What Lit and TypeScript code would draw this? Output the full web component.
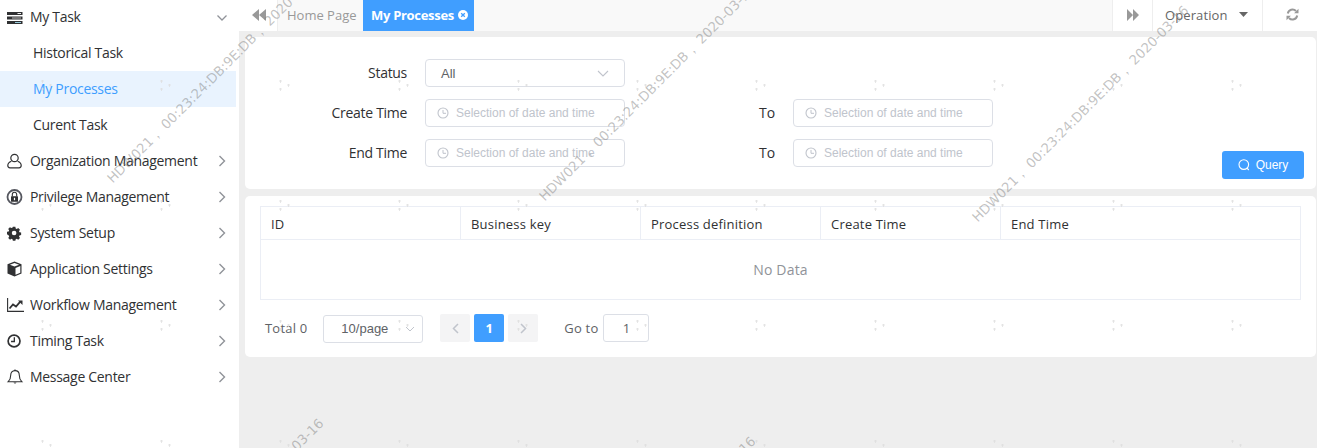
import { LitElement, html, css, svg } from 'lit';
import { customElement } from 'lit/decorators.js';

const chevronRight = html`<svg class="chev" width="8" height="12" viewBox="0 0 8 12"><path d="M1.500 1l5 5-5 5" fill="none" stroke="#909399" stroke-width="1.400"/></svg>`;
const chevronDown = html`<svg class="chev down" width="12" height="8" viewBox="0 0 12 8"><path d="M1.500 1.500l4.500 4.500 4.500-4.500" fill="none" stroke="#909399" stroke-width="1.300"/></svg>`;
const clock = html`<svg class="clock" width="12" height="12" viewBox="0 0 12 12"><circle cx="6" cy="6" r="5" fill="none" stroke="#c0c4cc" stroke-width="1.100"/><path d="M6 3v3.300h3" fill="none" stroke="#c0c4cc" stroke-width="1"/></svg>`;

// viewBox per icon, the glyphs are not all the same size in the menu
const icons: Record<string, { box: string; body: unknown }> = {
  task: {
    box: '0 0 16 16',
    body: svg`<rect x="0" y="2" width="15.500" height="3" fill="#303133"/><rect x="0" y="6.500" width="15.500" height="3" fill="#303133"/><rect x="0" y="11" width="15.500" height="3" fill="#303133"/><rect x="10.500" y="3" width="3.500" height="1" fill="#eee"/><rect x="5" y="7.500" width="9" height="1" fill="#bbb"/><rect x="8" y="12" width="6" height="1" fill="#9cd"/>`,
  },
  user: {
    box: '0 0 16 16',
    body: svg`<circle cx="7.500" cy="5" r="3.700" fill="none" stroke="#303133" stroke-width="1.200"/><path d="M4.400 8.200C2.100 9 .8 10.600.8 12.600c0 1.500 1 2.200 2.200 2.200h9c1.200 0 2.200-.7 2.200-2.200 0-2-1.300-3.600-3.600-4.400" fill="none" stroke="#303133" stroke-width="1.200"/>`,
  },
  lock: {
    box: '0 0 16 16',
    body: svg`<circle cx="7.500" cy="8" r="7" fill="none" stroke="#55575f" stroke-width="1.800"/><path d="M5.300 7.500V5.400a2.200 2.200 0 014.400 0v2.100" fill="none" stroke="#303133" stroke-width="1.100"/><rect x="4" y="7.200" width="7" height="5.600" rx=".5" fill="#303133"/><rect x="6.900" y="8.800" width="1.200" height="2.400" fill="#fff"/>`,
  },
  gear: {
    box: '0 -1 18 18',
    body: svg`<path fill="#303133" fill-rule="evenodd" d="M6.600 1h2.800l.4 1.900 1.200.5 1.600-1.100 2 2-1.100 1.600.5 1.200 1.900.4v2.800l-1.900.4-.5 1.200 1.100 1.600-2 2-1.600-1.100-1.200.5-.4 1.900H6.600l-.4-1.900-1.200-.5-1.600 1.100-2-2 1.100-1.600-.5-1.200L0 9.400V6.600l1.900-.4.5-1.200-1.100-1.600 2-2 1.600 1.100 1.200-.5zM8 5.400a2.600 2.600 0 100 5.200 2.600 2.600 0 000-5.200z"/>`,
  },
  box: {
    box: '0 0 16 16',
    body: svg`<path fill="#303133" d="M7.500.6l7 2.700v9.300l-7 2.800-7-2.800V3.300z"/><path fill="#fff" d="M7.500 2l4.600 1.700L7.500 5.500 2.900 3.700z"/><path fill="#fff" d="M8.500 6.900l4.800-1.900v6.800l-4.800 1.900z"/>`,
  },
  chart: {
    box: '0 0 16 16',
    body: svg`<path d="M.6 1v13.400H17" fill="none" stroke="#303133" stroke-width="1.100"/><path d="M2.500 11.500l3.500-4 3 2 4.300-4.800" fill="none" stroke="#303133" stroke-width="1.800"/><path d="M11 3.500h4.500v4.500z" fill="#303133"/>`,
  },
  timer: {
    box: '0 0 17 16',
    body: svg`<circle cx="7.500" cy="8" r="6.300" fill="none" stroke="#303133" stroke-width="1.800"/><path d="M7.800 4v4.500H4.300" fill="none" stroke="#303133" stroke-width="1.400"/>`,
  },
  bell: {
    box: '-1 0 16 16',
    body: svg`<path d="M7 1.600c-2.700 0-4.300 2-4.300 4.600 0 3.300-.9 5-2.500 6.500h13.600c-1.600-1.500-2.500-3.200-2.500-6.500 0-2.600-1.600-4.600-4.300-4.600z" fill="none" stroke="#303133" stroke-width="1.100"/><path d="M5.500 13.500a1.600 1.600 0 003 0z" fill="#303133"/><rect x="6.400" y=".5" width="1.200" height="1.500" fill="#303133"/>`,
  },
};

const menu = [
  ['user', 'Organization Management'],
  ['lock', 'Privilege Management'],
  ['gear', 'System Setup'],
  ['box', 'Application Settings'],
  ['chart', 'Workflow Management'],
  ['timer', 'Timing Task'],
  ['bell', 'Message Center'],
];

const WATERMARK = 'HDW021， 00:23:24:DB:9E:DB， 2020-03-16';
// start point of each rotated stamp
const stamps = [
  [105, 176], [537, 194], [970, 215],
  [105, 628], [537, 646],
];

@customElement('app-root')
export class AppRoot extends LitElement {
  static styles = css`
    :host {
      display: block;
      position: relative;
      width: 1317px;
      height: 448px;
      overflow: hidden;
      background: #eee;
      font-family: "Open Sans", "Noto Sans", sans-serif;
      font-size: 14px;
      color: #303133;
    }
    .page { display: flex; height: 100%; }

    .side { width: 239px; flex: none; background: #fff; padding-right: 3px; box-sizing: border-box; letter-spacing: -.3px; }
    .row { display: flex; align-items: center; height: 36px; box-sizing: border-box; padding: 0 10px 0 7px; }
    .row.first { height: 35px; }
    .row svg.ico { flex: none; margin-right: 7px; overflow: visible; }
    .row .lbl { flex: 1; padding-bottom: 2px; }
    .chev.down { margin-right: -2px; }
    .sub { display: flex; align-items: center; height: 36px; box-sizing: border-box; padding: 0 0 2px 33px; }
    .sub.active { background: #e9f3fe; color: #409eff; }

    .main { flex: 1; display: flex; flex-direction: column; min-width: 0; }
    .tabs { display: flex; height: 31px; background: #f9f9f9; flex: none; }
    .tab-btn { display: flex; align-items: center; justify-content: center; background: #fff; box-sizing: border-box; padding-bottom: 2px; }
    .tab-btn.prev { width: 39px; border-right: 1px solid #eee; padding-left: 2px; }
    .tab { display: flex; align-items: center; box-sizing: border-box; width: 85px; padding: 0 0 2px 9px; color: #999; font-size: 13px; }
    .tab.on { width: 111px; background: #409eff; color: #fff; font-weight: 700; padding-left: 8px; letter-spacing: -.3px; gap: 4px; }
    .tab-fill { flex: 1; }
    .tab-btn.next { width: 40px; border-left: 1px solid #eee; }
    .tab-btn.op { width: 110px; border-left: 1px solid #eee; color: #666; font-size: 13px; gap: 11px; justify-content: flex-start; padding-left: 12px; letter-spacing: .1px; }
    .tab-btn.ref { width: 55px; border-left: 1px solid #eee; padding-left: 4px; }

    .body { flex: 1; padding: 6px 1px 0 6px; display: flex; flex-direction: column; gap: 7px; }
    .card { background: #fff; border-radius: 5px; }
    .search { display: flex; justify-content: space-between; align-items: flex-end; padding: 22px 12px 10px 0; }
    .form { display: flex; flex-direction: column; gap: 12px; margin-bottom: 12px; }
    .frow { display: flex; align-items: center; height: 28px; }
    .flabel { width: 162px; margin-right: 18px; text-align: right; letter-spacing: -.3px; padding-bottom: 2px; }
    .to { margin-left: 134px; width: 34px; padding-bottom: 2px; }
    .input {
      width: 200px; height: 28px; box-sizing: border-box; display: flex; align-items: center;
      border: 1px solid #dcdfe6; border-radius: 4px; background: #fff;
      font-family: "Liberation Sans", Arial, sans-serif; font-size: 12px; color: #c0c4cc;
    }
    .input .clock { margin: 0 7px 0 11px; }
    .input.sel { padding: 0 15px; justify-content: space-between; color: #606266; font-size: 13px; }
    .btn {
      width: 82px; height: 28px; display: flex; align-items: center; justify-content: center; gap: 6px;
      background: #409eff; color: #fff; border-radius: 3px;
      font-family: "Liberation Sans", Arial, sans-serif; font-size: 12px;
    }

    .list { padding: 10px 15px 15px; }
    .table { border: 1px solid #ebeef5; }
    .thead { display: grid; grid-template-columns: 199px 180px 180px 180px 1fr; height: 32px; border-bottom: 1px solid #ebeef5; }
    .th { display: flex; align-items: center; padding: 1px 0 0 10px; border-left: 1px solid #ebeef5; font-size: 13px; letter-spacing: .2px; }
    .th:first-child { border-left: 0; }
    .empty { height: 59px; display: flex; align-items: center; justify-content: center; color: #909399; letter-spacing: .2px; }

    .pager { display: flex; align-items: center; margin-top: 14px; height: 28px; padding-left: 5px; color: #606266; font-size: 13px; letter-spacing: .2px; }
    .size {
      width: 100px; height: 28px; margin: 1px 0 0 16px; box-sizing: border-box; display: flex; align-items: center; justify-content: space-between;
      border: 1px solid #dcdfe6; border-radius: 3px; padding: 0 7px 0 17px;
      font-family: "Liberation Sans", Arial, sans-serif; letter-spacing: 0;
    }
    .pg { width: 30px; height: 28px; display: flex; align-items: center; justify-content: center; background: #f4f4f5; border-radius: 2px; margin-left: 4px; }
    .pg.first { margin-left: 17px; }
    .pg.on { background: #409eff; color: #fff; font-weight: 700; }
    .goto { margin-left: 26px; }
    .jump {
      width: 46px; height: 28px; box-sizing: border-box; margin-left: 5px; display: flex; align-items: center; justify-content: center;
      border: 1px solid #dcdfe6; border-radius: 3px;
    }

    .marks { position: absolute; inset: 0; pointer-events: none; overflow: hidden; }
    .marks svg { position: absolute; inset: 0; }
    .stamp {
      position: absolute; white-space: nowrap; transform-origin: 0 0; transform: rotate(-45deg);
      font-family: "DejaVu Sans", sans-serif; font-size: 13.300px; line-height: 1; color: rgba(120, 120, 120, .45);
    }
  `;

  private ico(name: string) {
    const i = icons[name];
    return html`<svg class="ico" width="16" height="16" viewBox=${i.box}>${i.body}</svg>`;
  }

  private renderTabs() {
    return html`
      <div class="tabs">
        <div class="tab-btn prev">
          <svg width="14" height="12" viewBox="0 0 14 12"><path fill="#999" d="M7 0v12L0 6zM14 0v12L7 6z"/></svg>
        </div>
        <div class="tab">Home Page</div>
        <div class="tab on">My Processes
          <svg width="10" height="10" viewBox="0 0 10 10"><circle cx="5" cy="5" r="5" fill="#fff"/><path d="M3.200 3.200l3.600 3.600M6.800 3.200l-3.600 3.600" stroke="#409eff" stroke-width="1.300"/></svg>
        </div>
        <div class="tab-fill"></div>
        <div class="tab-btn next">
          <svg width="12" height="12" viewBox="0 0 12 12"><path fill="#999" d="M0 0v12l6-6zM6 0v12l6-6z"/></svg>
        </div>
        <div class="tab-btn op">Operation
          <svg width="9" height="5" viewBox="0 0 9 5"><path fill="#666" d="M0 0h9L4.500 5z"/></svg>
        </div>
        <div class="tab-btn ref">
          <svg width="13" height="13" viewBox="0 0 13 13"><path fill="none" stroke="#999" stroke-width="2" d="M1.800 5.500A4.800 4.800 0 0110 3M11.200 7.500A4.800 4.800 0 013 10"/><path fill="#999" d="M12.500 .8v4.400H8.100zM.5 12.200V7.800h4.400z"/></svg>
        </div>
      </div>`;
  }

  private dateRow(label: string) {
    const field = html`<div class="input">${clock}Selection of date and time</div>`;
    return html`
      <div class="frow">
        <div class="flabel">${label}</div>${field}
        <div class="to">To</div>${field}
      </div>`;
  }

  render() {
    return html`
      <div class="page">
        <aside class="side">
          <div class="row first">${this.ico('task')}<span class="lbl">My Task</span>${chevronDown}</div>
          <div class="sub">Historical Task</div>
          <div class="sub active">My Processes</div>
          <div class="sub">Curent Task</div>
          ${menu.map(([ic, label]) => html`<div class="row">${this.ico(ic)}<span class="lbl">${label}</span>${chevronRight}</div>`)}
        </aside>
        <div class="main">
          ${this.renderTabs()}
          <div class="body">
            <section class="card search">
              <div class="form">
                <div class="frow">
                  <div class="flabel">Status</div>
                  <div class="input sel">All
                    <svg width="12" height="7" viewBox="0 0 12 7"><path d="M1 1l5 5 5-5" fill="none" stroke="#c0c4cc" stroke-width="1.100"/></svg>
                  </div>
                </div>
                ${this.dateRow('Create Time')}
                ${this.dateRow('End Time')}
              </div>
              <div class="btn">
                <svg width="12" height="12" viewBox="0 0 12 12"><circle cx="5.800" cy="5.600" r="4.800" fill="none" stroke="#fff" stroke-width="1.100"/><path d="M9 9.200l1.800 1.800" stroke="#fff" stroke-width="1.100"/></svg>
                Query
              </div>
            </section>
            <section class="card list">
              <div class="table">
                <div class="thead">
                  ${['ID', 'Business key', 'Process definition', 'Create Time', 'End Time'].map((h) => html`<div class="th">${h}</div>`)}
                </div>
                <div class="empty">No Data</div>
              </div>
              <div class="pager">
                <span>Total 0</span>
                <div class="size">10/page
                  <svg width="10" height="6" viewBox="0 0 10 6"><path d="M1 1l4 4 4-4" fill="none" stroke="#c0c4cc" stroke-width="1"/></svg>
                </div>
                <div class="pg first"><svg width="7" height="11" viewBox="0 0 7 11"><path d="M6 1L1.500 5.500 6 10" fill="none" stroke="#c0c4cc" stroke-width="1.500"/></svg></div>
                <div class="pg on">1</div>
                <div class="pg"><svg width="7" height="11" viewBox="0 0 7 11"><path d="M1 1l4.500 4.500L1 10" fill="none" stroke="#c0c4cc" stroke-width="1.500"/></svg></div>
                <span class="goto">Go to</span>
                <div class="jump">1</div>
              </div>
            </section>
          </div>
        </div>
      </div>
      <div class="marks">
        <svg width="1317" height="448">
          <defs>
            <pattern id="dots" x="41" y="80" width="119" height="120" patternUnits="userSpaceOnUse">
              <path d="M0 1h3M1.500 0v3M0 9h3M1.500 8v3M8 5h3M9.500 4v3" stroke="#dcdcdc" stroke-width=".7" fill="none"/>
            </pattern>
          </defs>
          <rect width="1317" height="448" fill="url(#dots)"/>
        </svg>
        ${stamps.map(([x, y]) => html`<div class="stamp" style="left:${x}px;top:${y}px">${WATERMARK}</div>`)}
      </div>`;
  }
}
